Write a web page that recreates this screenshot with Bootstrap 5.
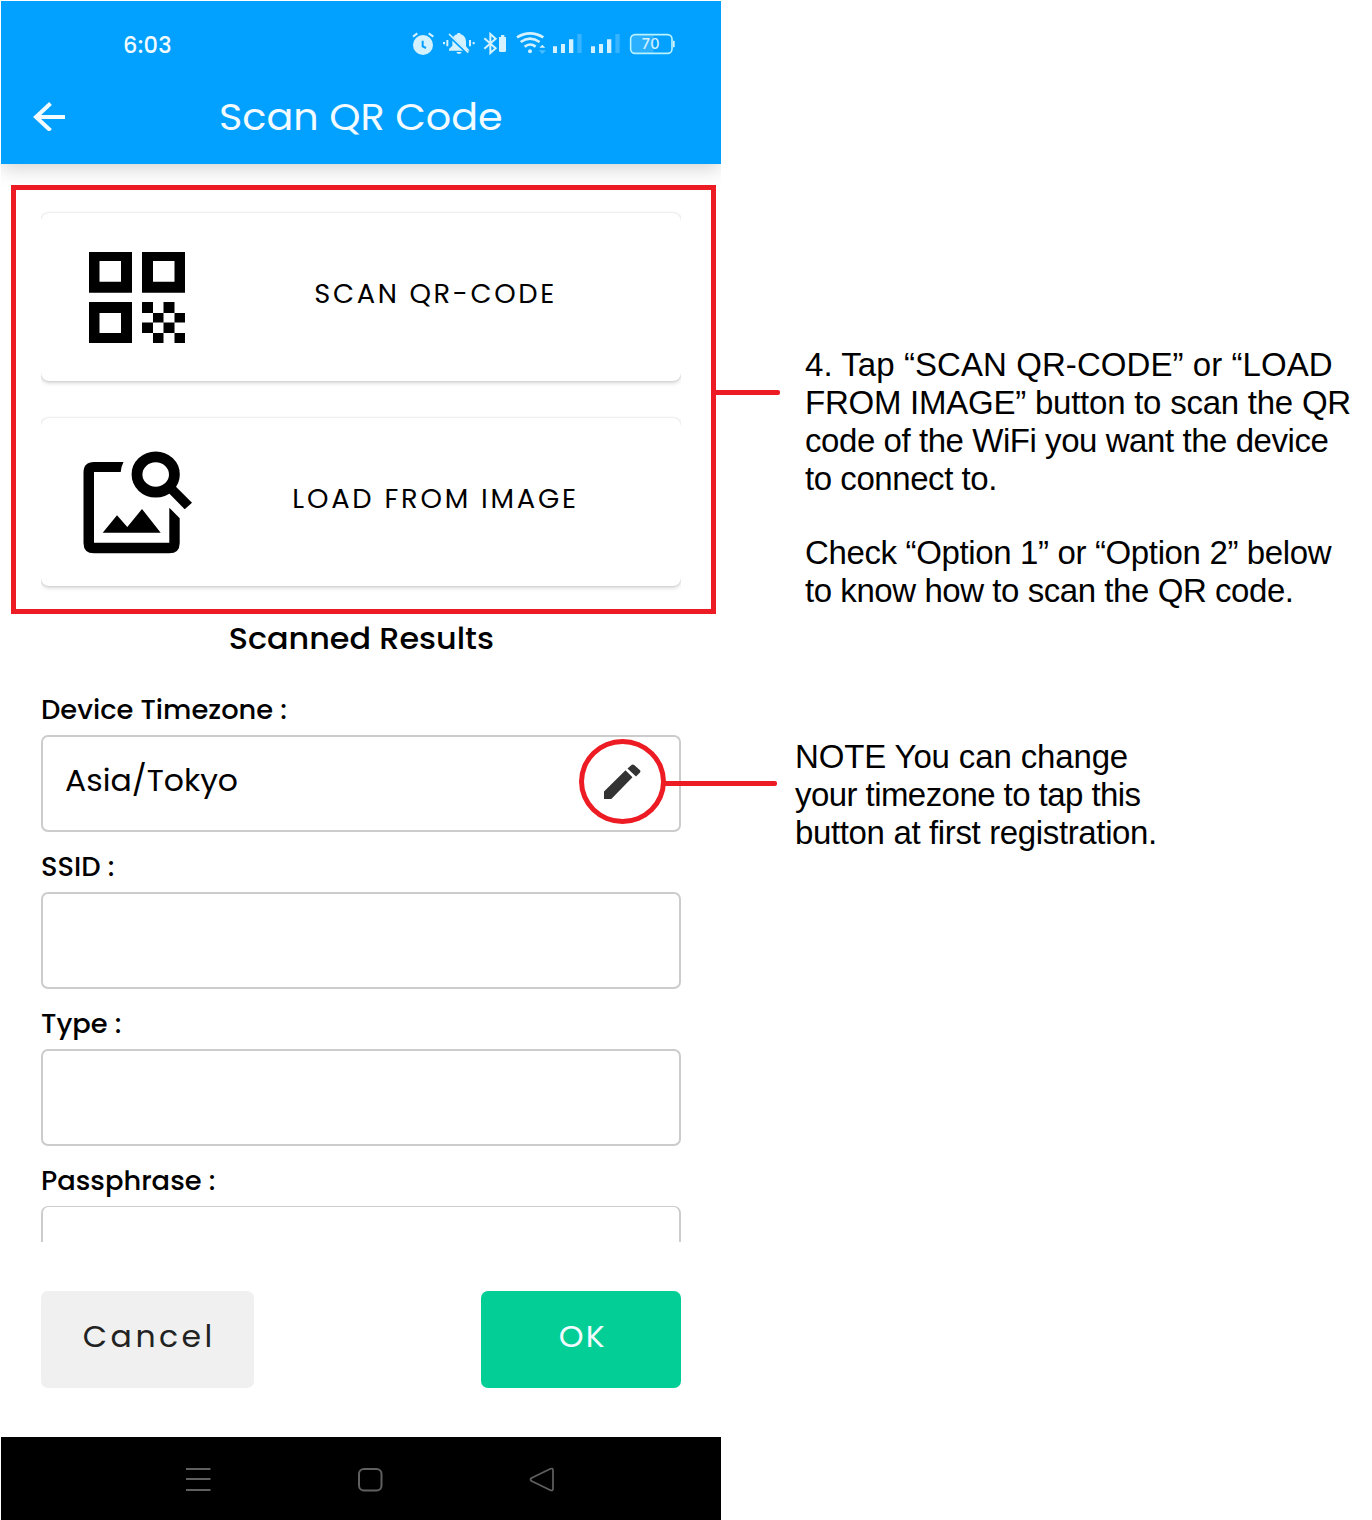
<!DOCTYPE html>
<html lang="en">
<head>
<meta charset="utf-8">
<meta name="viewport" content="width=device-width, initial-scale=1">
<title>Scan QR Code</title>
<link href="https://cdn.jsdelivr.net/npm/bootstrap@5.3.0/dist/css/bootstrap.min.css" rel="stylesheet">
<style>
body{background:#fff;color:#000;font-family:Poppins,Inter,"Open Sans",sans-serif;overflow:hidden}
.stage{width:1372px;height:1520px;padding:1px 0 0 1px}
.phone{width:720px;height:1519px;flex:none}
.wide{display:inline-block;transform:scaleX(1.05)}
.wide-start{transform:scaleX(1.05);transform-origin:0 50%}
.app-head{height:163px;background:#02a0ff;color:#f2fbff;clip-path:inset(0 0 -30px 0);box-shadow:0 3px 20px rgba(0,0,0,.2)}
.status{height:86px;padding:19px 31px 0 122px}
.clock{font-size:22.5px;font-weight:500;line-height:50px;letter-spacing:.3px}
.title-row{height:60px;padding-left:31px}
.app-title{font-size:37.8px;font-weight:400;line-height:60px;margin:0 0 0 153px}
.marked{margin:21px 5px 0 10px;height:429px;border:5px solid #ed1c24;padding:23px 30px 0 25px}
.tap-card{height:168px;width:640px;border:0;border-radius:8px;background:#fff;box-shadow:0 2px 4px rgba(0,0,0,.17),0 0 2px rgba(0,0,0,.17);clip-path:inset(-3px 0 -10px 0);font-size:26px;color:#000;padding:0}
.tap-card+.tap-card{margin-top:37px}
.tap-pic{width:146px;height:168px;flex:none}
.tap-label{width:494px;text-align:center;padding:0 0 6px 3px}
.l1{letter-spacing:2.5px}.l2{letter-spacing:2.65px}
.results-title{height:50px;line-height:50px;font-size:30.3px;font-weight:500;margin:0 0 11px;text-align:center}
.fields{height:567px;overflow:hidden;padding:0 40px}
.f-label{display:block;height:60px;line-height:60px;padding-top:5px;font-size:26px;font-weight:500}
.f-box{height:97px;border:2px solid #ccc;border-radius:7px;padding:0 22px;font-size:30px}
.f-box.last{border-top-width:1px}
.f-value{padding-bottom:6px}
.actions{padding:49px 40px;height:195px}
.act{height:97px;border-radius:7px;border:0;font-size:30px;padding:0 0 6px 4px}
.act-no{width:213px;background:#f0f0f0;color:#222;letter-spacing:3.3px}
.act-ok{width:200px;background:#02ce96;color:#f2fbff;letter-spacing:2px;padding-left:3px}
.sysbar{height:83px;background:#000}
.wire{position:absolute;height:5px;background:#ed1c24;border-radius:0 2px 2px 0}
.wire-a{left:714px;top:389px;width:65px}
.wire-b{left:664px;top:780px;width:112px}
.ring{position:absolute;left:578px;top:738px;width:87px;height:85px;border:5px solid #ed1c24;border-radius:50%}
.notes{font-family:"Liberation Sans",Arial,sans-serif;font-size:33px;line-height:38px;padding:345px 0 0 74px;white-space:nowrap}
.note-a{margin:0 0 36px 10px}
.note-b{margin:128px 0 0}
.t0{letter-spacing:.07px}.t1{letter-spacing:-.24px}.t2{letter-spacing:-.44px}.t3{letter-spacing:-.36px}.t4{letter-spacing:-.14px}.t5{letter-spacing:-.56px}
svg{display:block;flex:none}
</style>
</head>
<body>
<div class="stage d-flex">
  <main class="phone position-relative d-flex flex-column">
    <header class="app-head position-relative">
      <div class="status d-flex justify-content-between">
        <span class="clock">6:03</span>
        <svg width="290" height="50" viewBox="0 0 870 150" fill="#d4f1ff">
          <circle cx="69" cy="75" r="30"/>
          <path d="M39 50l13-10M86 40l14 10" stroke="#d4f1ff" stroke-width="6" fill="none"/>
          <path d="M68 62v17l10 5" stroke="#02a0ff" stroke-width="6" fill="none"/>
          <path d="M147 92v-5l10-10V64c0-14 8-20 15-21v-4h9v4c10 2 17 10 17 21v15l11 13z"/>
          <path d="M169 96h16q-2 6-8 6t-8-6zM129 66h6v7h-6zM139 60h6v19h-6zM207 60h6v19h-6zM218 66h6v7h-6z"/>
          <path d="M148 47l57 55" stroke="#02a0ff" stroke-width="9"/>
          <path d="M147 42l58 56" stroke="#d4f1ff" stroke-width="5"/>
          <path d="M253 55l34 30-16 14V42l16 14-34 30" fill="none" stroke="#d4f1ff" stroke-width="6"/>
          <path d="M303 45h10v6h5v41q0 4-4 4h-13q-4 0-4-4V51h6z"/>
          <g fill="none" stroke="#d4f1ff" stroke-width="8"><path d="M351 52q39-24 79 0M362 66q28-20 57 0M374 80q16-13 33 0"/></g>
          <circle cx="390" cy="94" r="6"/><path d="M418 83l9-9 9 9z"/><path d="M416 91h22l-11 11z" opacity=".35"/>
          <path d="M459 79h12v20h-12zM483 72h12v27h-12zM507 58h13v41h-13zM573 79h12v20h-12zM597 72h12v27h-12zM621 58h13v41h-13z"/>
          <path d="M532 42h13v57h-13zM646 42h13v57h-13z" opacity=".25"/>
          <path d="M695 46h66v52h-66z" opacity=".2"/>
          <rect x="692" y="44" width="124" height="56" rx="13" fill="none" stroke="#b8f3ff" stroke-width="5"/>
          <path d="M819 62h3q2 0 2 2v16q0 2-2 2h-3z"/>
          <text x="753" y="87" text-anchor="middle" font-family="Inter,sans-serif" font-size="43" font-weight="500" letter-spacing="2">70</text>
        </svg>
      </div>
      <div class="title-row d-flex align-items-center">
        <svg class="mb-1" width="34" height="32" viewBox="0 0 34 32" fill="none" stroke="#f2fbff" stroke-width="4"><path d="M33 18H4M18.500 4.500L4 18l14.500 13.500"/></svg>
        <h1 class="app-title wide-start">Scan QR Code</h1>
      </div>
    </header>

    <section class="marked">
      <button class="tap-card d-flex align-items-center" type="button">
        <svg class="tap-pic" viewBox="41 213 146 168">
          <path fill-rule="evenodd" d="M89 252h43v40.700H89zM99.500 261v20.700H121V261zM142 252h43v40.700h-43zM153 261v20.700h21.500V261zM89 302h43v41H89zM99.500 313v20H121v-20z"/>
          <path d="M142 302h11v11h-11zM163.500 302h11v11h-11zM153 313h10.500v9.500H153zM174.500 313H185v9.500h-10.500zM142 322.500h11V333h-11zM163.500 322.500h11V333h-11zM153 333h10.500v10H153zM174.500 333H185v10h-10.500z"/>
        </svg>
        <span class="tap-label wide l1">SCAN QR-CODE</span>
      </button>
      <button class="tap-card d-flex align-items-center" type="button">
        <svg class="tap-pic overflow-visible" viewBox="41 418 146 168">
          <path d="M123.500 462H94q-10.500 0-10.500 10.500V543q0 10.300 10.500 10.300h75.200q10.500 0 10.500-10.300V518.300L169.300 507.700v35H94V472h26.700q.3-5 2.800-10z"/>
          <ellipse cx="155.700" cy="474.500" rx="18.700" ry="17.700" fill="none" stroke="#000" stroke-width="10.800"/>
          <path d="M175 485.700l17 17-7.300 6.500L168 492.300zM102.700 532.700L117 515.300l10.300 11.700L142 509l18.700 23.700z"/>
        </svg>
        <span class="tap-label wide l2">LOAD FROM IMAGE</span>
      </button>
    </section>
    <span class="wire wire-a"></span>

    <h2 class="results-title"><span class="wide">Scanned Results</span></h2>
    <section class="fields">
      <span class="f-label wide-start">Device Timezone :</span>
      <div class="f-box d-flex align-items-center justify-content-between">
        <span class="f-value wide-start">Asia/Tokyo</span>
        <svg class="mb-1" width="54" height="44" viewBox="603 760 54 44" fill="#333"><path d="M604 799v-7.500L625.500 770.300l7 7L611.300 799zM627.500 768.500l4-3.500q1.500-1 3 .3l5.500 5q1 1 0 2.200l-4 4z"/></svg>
      </div>
      <span class="f-label wide-start">SSID :</span>
      <div class="f-box"></div>
      <span class="f-label wide-start">Type :</span>
      <div class="f-box"></div>
      <span class="f-label wide-start">Passphrase :</span>
      <div class="f-box last"></div>
    </section>
    <span class="ring"></span>
    <span class="wire wire-b"></span>

    <div class="actions d-flex justify-content-between">
      <button class="act act-no" type="button"><span class="wide">Cancel</span></button>
      <button class="act act-ok" type="button"><span class="wide">OK</span></button>
    </div>
    <nav class="sysbar">
      <svg width="720" height="83" viewBox="1 1437 720 83" fill="none" stroke="#606060" stroke-width="2">
        <path d="M186 1469h24.500M186 1479h24.500M186 1490h24.500"/>
        <rect x="359" y="1469" width="22.500" height="21.500" rx="5"/>
        <path stroke-width="1.700" stroke-linejoin="round" d="M531.500 1478L550 1469q3-1.500 3 1.500v18q0 3-3 1.500L531.500 1481q-2-1.500 0-3z"/>
      </svg>
    </nav>
  </main>
  <aside class="notes">
    <p class="note-a"><span class="t0">4. Tap “SCAN QR-CODE” or “LOAD</span><br><span class="t1">FROM IMAGE” button to scan the QR</span><br><span class="t2">code of the WiFi you want the device<br>to connect to.</span></p>
    <p class="note-a"><span class="t3">Check “Option 1” or “Option 2” below</span><br><span class="t2">to know how to scan the QR code.</span></p>
    <p class="note-b"><span class="t4">NOTE You can change</span><br><span class="t5">your timezone to tap this</span><br><span class="t3">button at first registration.</span></p>
  </aside>
</div>
<script src="https://cdn.jsdelivr.net/npm/bootstrap@5.3.0/dist/js/bootstrap.bundle.min.js"></script>
</body>
</html>
